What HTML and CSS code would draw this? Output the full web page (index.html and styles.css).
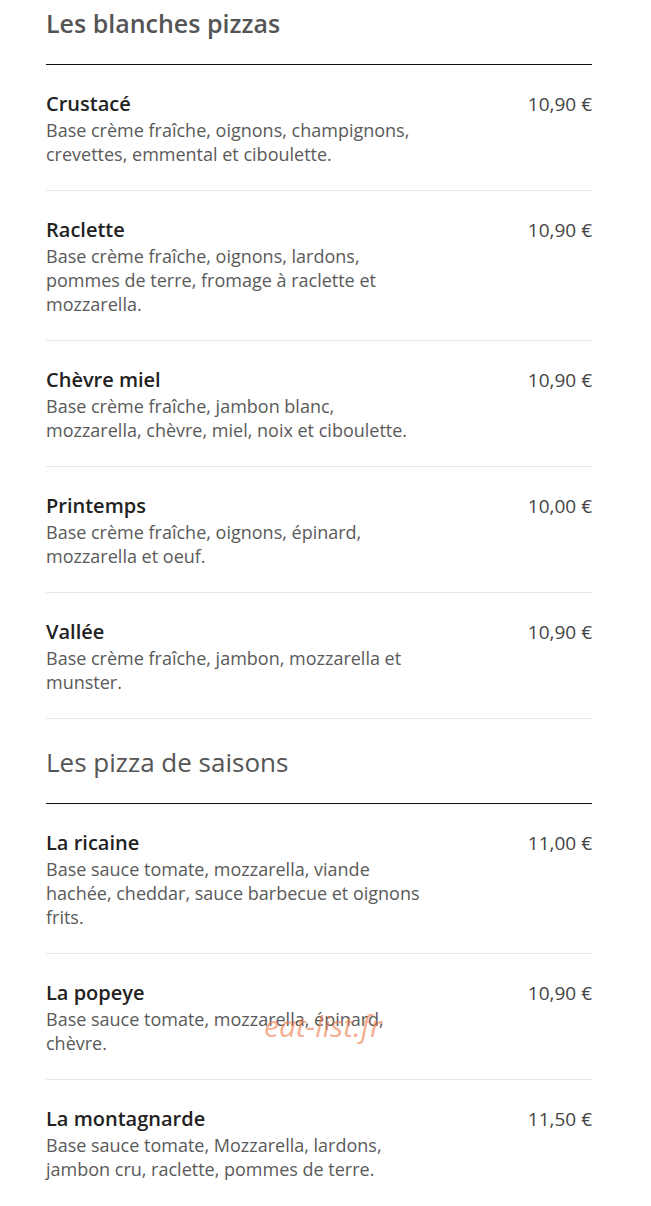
FILE: index.html
```html
<!DOCTYPE html>
<html lang="fr">
<head>
  <meta charset="UTF-8" />
  <title>Pizzas</title>
  <link rel="stylesheet" href="styles.css">
</head>
<body>

  <div class="menu">
    <h2 class="section-title bold">Les blanches pizzas</h2>
    <ul class="items">
      <li class="item">
        <div class="info">
          <div class="name">Crustacé</div>
          <p class="desc">Base crème fraîche, oignons, champignons, crevettes, emmental et ciboulette.</p>
        </div>
        <div class="price">10,90 €</div>
      </li>
      <li class="item">
        <div class="info">
          <div class="name">Raclette</div>
          <p class="desc">Base crème fraîche, oignons, lardons, pommes de terre, fromage à raclette et mozzarella.</p>
        </div>
        <div class="price">10,90 €</div>
      </li>
      <li class="item">
        <div class="info">
          <div class="name">Chèvre miel</div>
          <p class="desc">Base crème fraîche, jambon blanc, mozzarella, chèvre, miel, noix et ciboulette.</p>
        </div>
        <div class="price">10,90 €</div>
      </li>
      <li class="item">
        <div class="info">
          <div class="name">Printemps</div>
          <p class="desc">Base crème fraîche, oignons, épinard, mozzarella et oeuf.</p>
        </div>
        <div class="price">10,00 €</div>
      </li>
      <li class="item">
        <div class="info">
          <div class="name">Vallée</div>
          <p class="desc">Base crème fraîche, jambon, mozzarella et munster.</p>
        </div>
        <div class="price">10,90 €</div>
      </li>
    </ul>

    <h2 class="section-title">Les pizza de saisons</h2>
    <ul class="items">
      <li class="item">
        <div class="info">
          <div class="name">La ricaine</div>
          <p class="desc">Base sauce tomate, mozzarella, viande hachée, cheddar, sauce barbecue et oignons frits.</p>
        </div>
        <div class="price">11,00 €</div>
      </li>
      <li class="item">
        <div class="info">
          <div class="name">La popeye</div>
          <p class="desc">Base sauce tomate, mozzarella, épinard, chèvre.</p>
        </div>
        <div class="price">10,90 €</div>
        <span class="watermark">eat-list.fr</span>
      </li>
      <li class="item last">
        <div class="info">
          <div class="name">La montagnarde</div>
          <p class="desc">Base sauce tomate, Mozzarella, lardons, jambon cru, raclette, pommes de terre.</p>
        </div>
        <div class="price">11,50 €</div>
      </li>
    </ul>
  </div>

</body>
</html>
```

FILE: styles.css
```css
body {
  margin: 0;
  background: #fff;
  font-family: 'Open Sans', sans-serif;
  color: #555;
}

.menu {
  width: 546px;
  margin-left: 46px;
  padding-top: 7px;
}

.section-title {
  margin: 27px 0 0;
  padding-bottom: 25px;
  border-bottom: 1px solid #111;
  font-size: 26px;
  line-height: 32px;
  font-weight: 400;
  color: #555;
}

.section-title.bold {
  margin-top: 0;
  font-size: 25px;
  font-weight: 600;
}

.items {
  list-style: none;
  margin: 0;
  padding: 0;
}

.item {
  position: relative;
  display: flex;
  justify-content: space-between;
  padding: 25px 0 24px;
  border-bottom: 1px solid #e8e8e8;
}

.item.last {
  border-bottom: none;
}

.info {
  width: 382px;
}

.name {
  font-size: 20px;
  line-height: 28px;
  font-weight: 600;
  color: #222;
}

.desc {
  margin: 0;
  font-size: 18px;
  line-height: 24px;
  color: #5a5a5a;
}

.price {
  font-size: 19px;
  line-height: 28px;
  color: #444;
}

.watermark {
  position: absolute;
  left: 218px;
  top: 51px;
  font-size: 30px;
  font-style: italic;
  color: rgba(240, 120, 70, 0.6);
  pointer-events: none;
}
```
